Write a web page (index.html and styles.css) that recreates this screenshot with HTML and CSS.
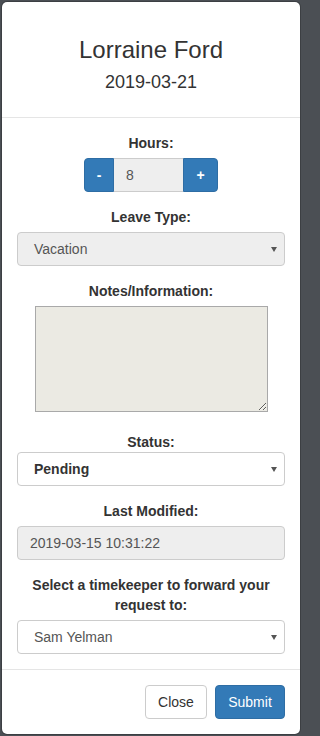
FILE: index.html
```html
<!DOCTYPE html>
<html>
<head>
<meta charset="utf-8">
<link rel="stylesheet" href="styles.css">
</head>
<body>
<div class="modal">
  <div class="modal-header">
    <h3 class="title">Lorraine Ford</h3>
    <h4 class="date">2019-03-21</h4>
  </div>
  <div class="modal-body">
    <div class="group">
      <div class="label">Hours:</div>
      <div class="input-group">
        <div class="btn-step left">-</div>
        <div class="step-value">8</div>
        <div class="btn-step right">+</div>
      </div>
    </div>
    <div class="group">
      <div class="label">Leave Type:</div>
      <div class="select disabled"><span>Vacation</span><span class="arrow"></span></div>
    </div>
    <div class="group notes">
      <div class="label">Notes/Information:</div>
      <textarea class="notes-area"></textarea>
    </div>
    <div class="group">
      <div class="label tight">Status:</div>
      <div class="select"><span class="strong">Pending</span><span class="arrow"></span></div>
    </div>
    <div class="group">
      <div class="label">Last Modified:</div>
      <div class="readonly">2019-03-15 10:31:22</div>
    </div>
    <div class="group last">
      <div class="label">Select a timekeeper to forward your request to:</div>
      <div class="select"><span>Sam Yelman</span><span class="arrow"></span></div>
    </div>
  </div>
  <div class="modal-footer">
    <div class="btn btn-default">Close</div>
    <div class="btn btn-primary">Submit</div>
  </div>
</div>
</body>
</html>
```
FILE: styles.css
```css
* { box-sizing: border-box; }
html, body { margin: 0; padding: 0; }
body {
  background: #4b4f54;
  font-family: "Liberation Sans", Arial, sans-serif;
  font-size: 14px;
  line-height: 20px;
  color: #333;
  width: 302px;
  height: 736px;
  overflow: hidden;
}
.modal {
  margin: 1px;
  width: 300px;
  background: #fff;
  border: 1px solid rgba(0,0,0,0.2);
  border-radius: 6px;
  background-clip: padding-box;
}
.modal-header {
  padding: 15px;
  border-bottom: 1px solid #e5e5e5;
  text-align: center;
}
.title {
  margin: 20px 0 0;
  font-size: 24px;
  line-height: 26px;
  font-weight: normal;
}
.date {
  margin: 9px 0 10px;
  font-size: 18px;
  line-height: 20px;
  font-weight: normal;
}
.modal-body {
  padding: 15px;
  text-align: center;
}
.group { margin-bottom: 15px; }
.group.notes { margin-bottom: 20px; }
.group.last { margin-bottom: 0; }
.label {
  font-weight: bold;
  margin-bottom: 5px;
}
.label.tight { margin-bottom: 0; }
.input-group {
  display: flex;
  width: 134px;
  height: 34px;
  margin: 0 auto;
}
.btn-step {
  background: #337ab7;
  border: 1px solid #2e6da4;
  color: #fff;
  font-weight: bold;
  display: flex;
  align-items: center;
  justify-content: center;
}
.btn-step.left { width: 30px; border-radius: 4px 0 0 4px; }
.btn-step.right { width: 35px; border-radius: 0 4px 4px 0; }
.step-value {
  width: 69px;
  background: #eee;
  border-top: 1px solid #ccc;
  border-bottom: 1px solid #ccc;
  color: #555;
  text-align: left;
  padding: 6px 12px;
}
.select {
  height: 34px;
  border: 1px solid #ccc;
  border-radius: 4px;
  background: #fff;
  display: flex;
  align-items: center;
  justify-content: space-between;
  padding: 0 7px 0 16px;
  color: #555;
  text-align: left;
}
.select.disabled { background: #eee; }
.select .strong { font-weight: bold; color: #333; }
.arrow {
  width: 0;
  height: 0;
  border-left: 3px solid transparent;
  border-right: 3px solid transparent;
  border-top: 5px solid #555;
  margin-top: 1px;
}
.notes-area {
  display: block;
  margin: 0 auto;
  width: 233px;
  height: 106px;
  border: 1px solid #a9a9a9;
  background: #ebeae3;
  padding: 2px;
  font-family: inherit;
}
.readonly {
  height: 34px;
  border: 1px solid #ccc;
  border-radius: 4px;
  background: #eee;
  color: #555;
  padding: 6px 12px;
  text-align: left;
}
.modal-footer {
  padding: 15px;
  border-top: 1px solid #e5e5e5;
  display: flex;
  justify-content: flex-end;
  gap: 8px;
}
.btn {
  height: 34px;
  padding: 6px 12px;
  border-radius: 4px;
  border: 1px solid #ccc;
}
.btn-default { background: #fff; color: #333; width: 62px; text-align: center; }
.btn-primary { background: #337ab7; border-color: #2e6da4; color: #fff; width: 70px; text-align: center; }
```
